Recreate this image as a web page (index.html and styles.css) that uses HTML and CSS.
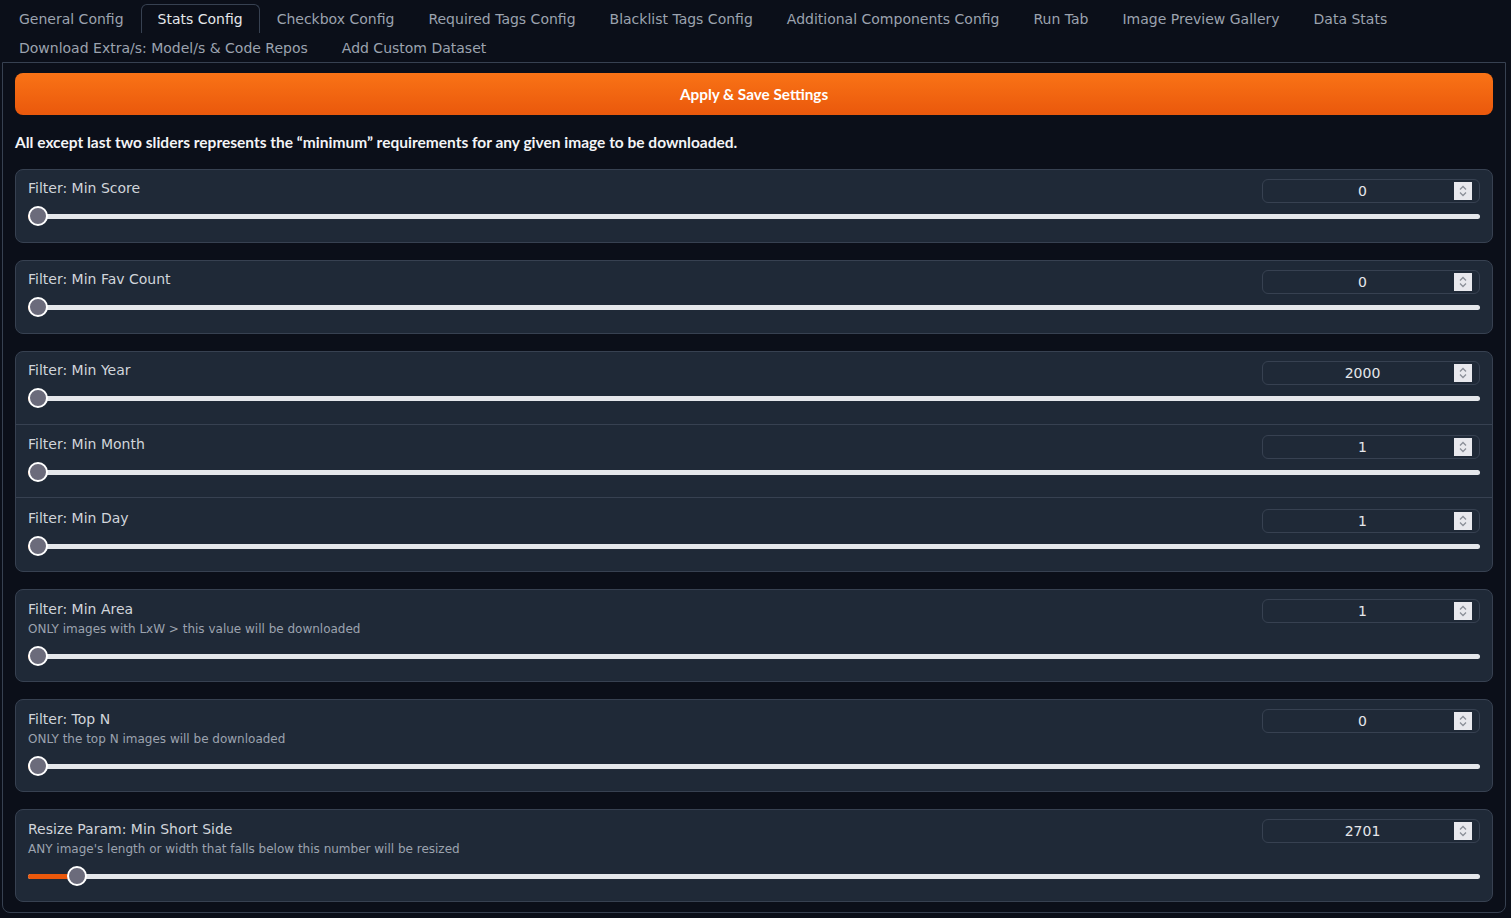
FILE: index.html
```html
<!DOCTYPE html>
<html lang="en">
<head>
<meta charset="utf-8">
<title>Stats Config</title>
<link rel="stylesheet" href="styles.css">
</head>
<body>
<div class="app">
  <nav class="tabs">
    <button class="tab">General Config</button>
    <button class="tab tab--active">Stats Config</button>
    <button class="tab">Checkbox Config</button>
    <button class="tab">Required Tags Config</button>
    <button class="tab">Blacklist Tags Config</button>
    <button class="tab">Additional Components Config</button>
    <button class="tab">Run Tab</button>
    <button class="tab">Image Preview Gallery</button>
    <button class="tab">Data Stats</button>
    <button class="tab">Download Extra/s: Model/s &amp; Code Repos</button>
    <button class="tab">Add Custom Dataset</button>
  </nav>
  <section class="panel">
    <button class="primary">Apply &amp; Save Settings</button>
    <p class="note">All except last two sliders represents the “minimum” requirements for any given image to be downloaded.</p>

    <div class="block">
      <div class="row">
        <div class="head">
          <div class="labels"><span class="label">Filter: Min Score</span></div>
          <div class="num"><span class="val">0</span><span class="spin"><svg viewBox="0 0 18 18"><path d="M6 7.5 9 4.5 12 7.5M6 10.5 9 13.5 12 10.5"/></svg></span></div>
        </div>
        <div class="slider" style="--p:0%"><div class="fill"></div><div class="thumb"></div></div>
      </div>
    </div>

    <div class="block">
      <div class="row">
        <div class="head">
          <div class="labels"><span class="label">Filter: Min Fav Count</span></div>
          <div class="num"><span class="val">0</span><span class="spin"><svg viewBox="0 0 18 18"><path d="M6 7.5 9 4.5 12 7.5M6 10.5 9 13.5 12 10.5"/></svg></span></div>
        </div>
        <div class="slider" style="--p:0%"><div class="fill"></div><div class="thumb"></div></div>
      </div>
    </div>

    <div class="block block--group">
      <div class="row">
        <div class="head">
          <div class="labels"><span class="label">Filter: Min Year</span></div>
          <div class="num"><span class="val">2000</span><span class="spin"><svg viewBox="0 0 18 18"><path d="M6 7.5 9 4.5 12 7.5M6 10.5 9 13.5 12 10.5"/></svg></span></div>
        </div>
        <div class="slider" style="--p:0%"><div class="fill"></div><div class="thumb"></div></div>
      </div>
      <div class="row">
        <div class="head">
          <div class="labels"><span class="label">Filter: Min Month</span></div>
          <div class="num"><span class="val">1</span><span class="spin"><svg viewBox="0 0 18 18"><path d="M6 7.5 9 4.5 12 7.5M6 10.5 9 13.5 12 10.5"/></svg></span></div>
        </div>
        <div class="slider" style="--p:0%"><div class="fill"></div><div class="thumb"></div></div>
      </div>
      <div class="row">
        <div class="head">
          <div class="labels"><span class="label">Filter: Min Day</span></div>
          <div class="num"><span class="val">1</span><span class="spin"><svg viewBox="0 0 18 18"><path d="M6 7.5 9 4.5 12 7.5M6 10.5 9 13.5 12 10.5"/></svg></span></div>
        </div>
        <div class="slider" style="--p:0%"><div class="fill"></div><div class="thumb"></div></div>
      </div>
    </div>

    <div class="block">
      <div class="row row--info">
        <div class="head">
          <div class="labels"><span class="label">Filter: Min Area</span><span class="info">ONLY images with LxW &gt; this value will be downloaded</span></div>
          <div class="num"><span class="val">1</span><span class="spin"><svg viewBox="0 0 18 18"><path d="M6 7.5 9 4.5 12 7.5M6 10.5 9 13.5 12 10.5"/></svg></span></div>
        </div>
        <div class="slider" style="--p:0%"><div class="fill"></div><div class="thumb"></div></div>
      </div>
    </div>

    <div class="block">
      <div class="row row--info">
        <div class="head">
          <div class="labels"><span class="label">Filter: Top N</span><span class="info">ONLY the top N images will be downloaded</span></div>
          <div class="num"><span class="val">0</span><span class="spin"><svg viewBox="0 0 18 18"><path d="M6 7.5 9 4.5 12 7.5M6 10.5 9 13.5 12 10.5"/></svg></span></div>
        </div>
        <div class="slider" style="--p:0%"><div class="fill"></div><div class="thumb"></div></div>
      </div>
    </div>

    <div class="block">
      <div class="row row--info">
        <div class="head">
          <div class="labels"><span class="label">Resize Param: Min Short Side</span><span class="info">ANY image's length or width that falls below this number will be resized</span></div>
          <div class="num"><span class="val">2701</span><span class="spin"><svg viewBox="0 0 18 18"><path d="M6 7.5 9 4.5 12 7.5M6 10.5 9 13.5 12 10.5"/></svg></span></div>
        </div>
        <div class="slider" style="--p:2.701%"><div class="fill"></div><div class="thumb"></div></div>
      </div>
    </div>
  </section>
</div>
</body>
</html>
```

FILE: styles.css
```css
* { box-sizing: border-box; }

html, body {
  margin: 0;
  padding: 0;
  background: #0b0f19;
}

body {
  font-family: "DejaVu Sans", "Liberation Sans", sans-serif;
  color: #d1d5db;
}

.app {
  width: 1504px;
  margin-left: 2px;
  padding-top: 4px;
}

.tabs {
  display: flex;
  flex-wrap: wrap;
}

.tab {
  height: 29px;
  padding: 0 16px;
  border: 1px solid transparent;
  border-bottom: none;
  border-radius: 6px 6px 0 0;
  background: transparent;
  color: #9ca3af;
  font-family: "DejaVu Sans", sans-serif;
  font-size: 14px;
  line-height: 27px;
  white-space: nowrap;
  cursor: pointer;
}

.tab--active {
  border-color: #374151;
  color: #e5e7eb;
}

.panel {
  border: 1px solid #374151;
  border-radius: 0 0 8px 8px;
  padding: 10px 12px 10px;
  display: flex;
  flex-direction: column;
  gap: 17px;
}

.primary {
  height: 42px;
  width: 100%;
  border: none;
  border-radius: 8px;
  background: linear-gradient(to bottom, #f97316, #ea580c);
  color: #ffffff;
  font-family: "Lato", "Open Sans", sans-serif;
  font-weight: 700;
  font-size: 15.3px;
  cursor: pointer;
}

.note {
  margin: 0;
  height: 20px;
  line-height: 20px;
  font-family: "Lato", "Open Sans", sans-serif;
  font-weight: 700;
  font-size: 15.5px;
  color: #f3f4f6;
}

.block {
  border: 1px solid #374151;
  border-radius: 8px;
  background: #1f2937;
}

.row {
  padding: 9px 12px 16px;
}

.row + .row {
  border-top: 1px solid #374151;
}

.block--group .row:nth-child(2) {
  padding-top: 10px;
  padding-bottom: 15px;
}

.block--group .row:nth-child(3) {
  padding-top: 11px;
  padding-bottom: 15px;
}

.row--info {
  padding-top: 10px;
  padding-bottom: 15px;
}

.head {
  display: flex;
  justify-content: space-between;
  align-items: flex-start;
  min-height: 24px;
}

.row--info .head {
  margin-top: -1px;
}

.labels {
  display: flex;
  flex-direction: column;
}

.row--info .labels {
  padding-top: 1px;
}

.label {
  font-size: 14px;
  line-height: 18px;
  color: #d1d5db;
}

.info {
  margin: 2px 0 5px;
  font-size: 12px;
  line-height: 18px;
  color: #9ca3af;
}

.num {
  width: 218px;
  height: 24px;
  border: 1px solid #374151;
  border-radius: 6px;
  display: flex;
  align-items: center;
  padding-left: 8px;
  padding-right: 7px;
}

.val {
  flex: 1;
  text-align: center;
  font-size: 14px;
  line-height: 16px;
  color: #e5e7eb;
}

.spin {
  width: 18px;
  height: 18px;
  background: #e8e8ed;
  display: flex;
}

.spin svg {
  width: 18px;
  height: 18px;
  fill: none;
  stroke: #8b8f98;
  stroke-width: 1.3;
}

.slider {
  position: relative;
  margin-top: 3px;
  height: 20px;
}

.slider::before {
  content: "";
  position: absolute;
  left: 0;
  right: 0;
  top: 8px;
  height: 5px;
  border-radius: 3px;
  background: #e5e7eb;
}

.fill {
  position: absolute;
  left: 0;
  top: 8px;
  height: 5px;
  border-radius: 3px 0 0 3px;
  width: calc((100% - 20px) * var(--p) / 100% + 10px);
  background: #ea580c;
}

.thumb {
  position: absolute;
  top: 0;
  left: calc((100% - 20px) * var(--p) / 100%);
  width: 20px;
  height: 20px;
  border-radius: 50%;
  background: #6b6b7b;
  border: 2px solid #ffffff;
}
```
